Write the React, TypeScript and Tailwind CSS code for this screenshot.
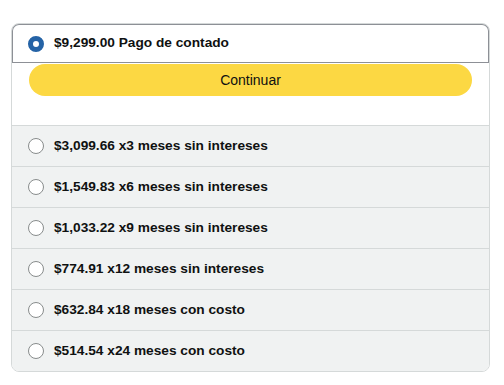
const options = [
  { id: 'm3', label: '$3,099.66 x3 meses sin intereses' },
  { id: 'm6', label: '$1,549.83 x6 meses sin intereses' },
  { id: 'm9', label: '$1,033.22 x9 meses sin intereses' },
  { id: 'm12', label: '$774.91 x12 meses sin intereses' },
  { id: 'm18', label: '$632.84 x18 meses con costo' },
  { id: 'm24', label: '$514.54 x24 meses con costo' },
];

const Radio = ({ checked }: { checked?: boolean }) =>
  checked ? (
    <span className="w-4 h-4 rounded-full border-[5px] border-[#2563a6] bg-white shrink-0" />
  ) : (
    <span className="w-4 h-4 rounded-full border border-[#888c8c] bg-white shrink-0" />
  );

const App = () => {
  return (
    <div className="w-[504px] h-[385px] bg-white pt-[23px] pl-[11px] font-['Liberation_Sans',Arial,sans-serif] text-[#0f1111]">
      <div className="w-[479px] border border-[#d5d9d9] rounded-lg overflow-hidden">
        <div className="-m-px h-[41px] border-2 border-[#8d9096] rounded-t-lg flex items-center pl-[15px] gap-[10px] bg-white">
          <Radio checked />
          <span className="text-[13.7px] font-bold">$9,299.00 Pago de contado</span>
        </div>
        <div className="px-[17px] pt-px pb-[29px] bg-white">
          <button className="w-full h-8 rounded-full bg-[#fcd843] text-sm">Continuar</button>
        </div>
        {options.map((opt) => (
          <div
            key={opt.id}
            className="h-[41px] border-t border-[#d5d9d9] bg-[#f0f2f2] flex items-center pl-4 gap-[10px]"
          >
            <Radio />
            <span className="text-[13.7px] font-bold">{opt.label}</span>
          </div>
        ))}
      </div>
    </div>
  );
};

export default App;
